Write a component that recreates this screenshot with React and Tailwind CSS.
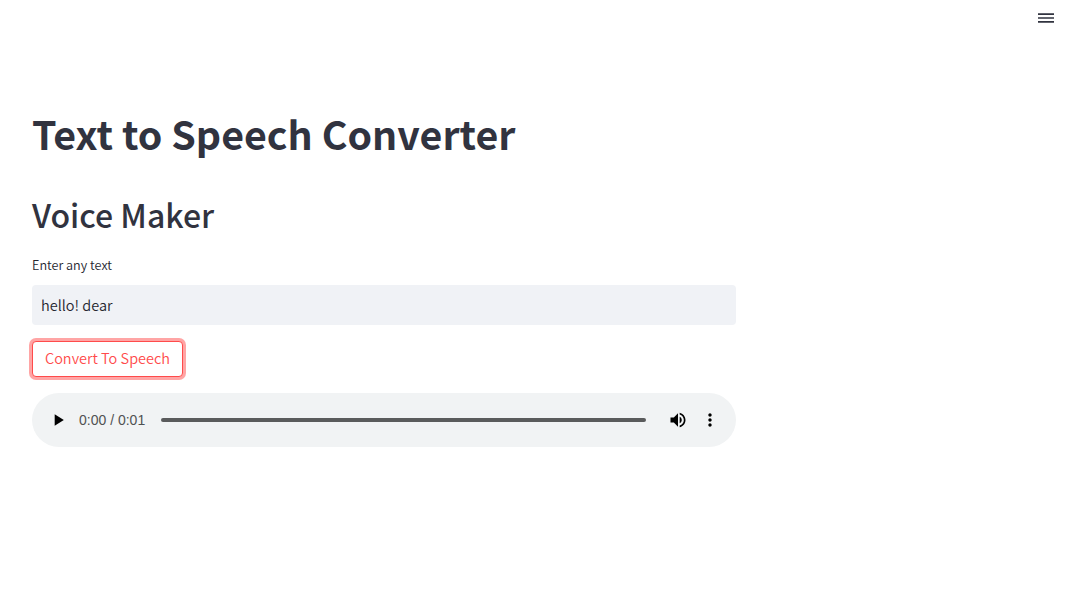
import React from "react";

function MenuIcon() {
  return (
    <svg width="16" height="10" viewBox="0 0 16 10" fill="currentColor" aria-hidden="true">
      <path d="M0 .3h16V2H0zM0 4.150h16v1.700H0zM0 8h16v1.700H0z" />
    </svg>
  );
}

function AudioPlayer() {
  return (
    <div className="mt-4 flex h-[54px] w-full items-center rounded-full bg-[#f1f3f4] pl-4 pr-4 text-black">
      <button aria-label="Play">
        <svg width="20" height="20" viewBox="0 0 24 24" fill="currentColor">
          <path d="M8 5v14l11-7z" />
        </svg>
      </button>
      <span className="ml-[11px] w-[66px] whitespace-nowrap font-['Liberation_Sans',Arial,sans-serif] text-[14px] leading-5 text-[#505152]">
        0:00 / 0:01
      </span>
      <div className="ml-4 h-1 w-[484.500px] rounded-full bg-[#5a5b5c]" />
      <button aria-label="Volume" className="ml-[22.500px]">
        <svg width="20" height="20" viewBox="0 0 24 24" fill="currentColor">
          <path d="M3 9v6h4l5 5V4L7 9H3zm13.500 3c0-1.770-1.020-3.290-2.500-4.030v8.050c1.480-.730 2.500-2.250 2.500-4.020zM14 3.230v2.060c2.890.860 5 3.540 5 6.710s-2.110 5.850-5 6.710v2.060c4.010-.910 7-4.490 7-8.770s-2.990-7.860-7-8.770z" />
        </svg>
      </button>
      <button aria-label="More options" className="ml-3">
        <svg width="20" height="20" viewBox="0 0 24 24" fill="currentColor">
          <path d="M12 8c1.100 0 2-.900 2-2s-.900-2-2-2-2 .900-2 2 .900 2 2 2zm0 2c-1.100 0-2 .900-2 2s.900 2 2 2 2-.900 2-2-.900-2-2-2zm0 6c-1.100 0-2 .900-2 2s.900 2 2 2 2-.900 2-2-.900-2-2-2z" />
        </svg>
      </button>
    </div>
  );
}

export default function App() {
  return (
    <div className="h-[589px] overflow-hidden bg-white font-['Noto_Sans_CJK_SC',sans-serif] text-[#31333f]">
      <header className="flex h-9 items-center justify-end pr-4">
        <button aria-label="Menu">
          <MenuIcon />
        </button>
      </header>
      <main className="flex w-[736px] flex-col items-start pl-8 pt-[70px]">
        <h1 className="whitespace-nowrap text-[39.350px] font-bold leading-[53px]">
          Text to Speech Converter
        </h1>
        <h2 className="mt-[34px] whitespace-nowrap text-[32px] font-medium leading-[43px]">
          Voice Maker
        </h2>
        <label className="mt-[19px] text-[12.650px] font-[350] leading-[20px] text-[#262730]">Enter any text</label>
        <div className="mt-[10px] flex h-10 w-full items-center rounded bg-[#f0f2f6] px-[9px] text-[14.500px] font-[350] leading-6 text-[#262730]">
          hello! dear
        </div>
        <button className="mt-4 flex h-9 w-[151px] items-center justify-center whitespace-nowrap rounded border border-[#ff4b4b] bg-white pb-[2px] text-[14.500px] font-[350] leading-6 text-[#ff4b4b] shadow-[0_0_0_3px_rgba(255,75,75,0.5)]">
          Convert To Speech
        </button>
        <AudioPlayer />
      </main>
    </div>
  );
}
